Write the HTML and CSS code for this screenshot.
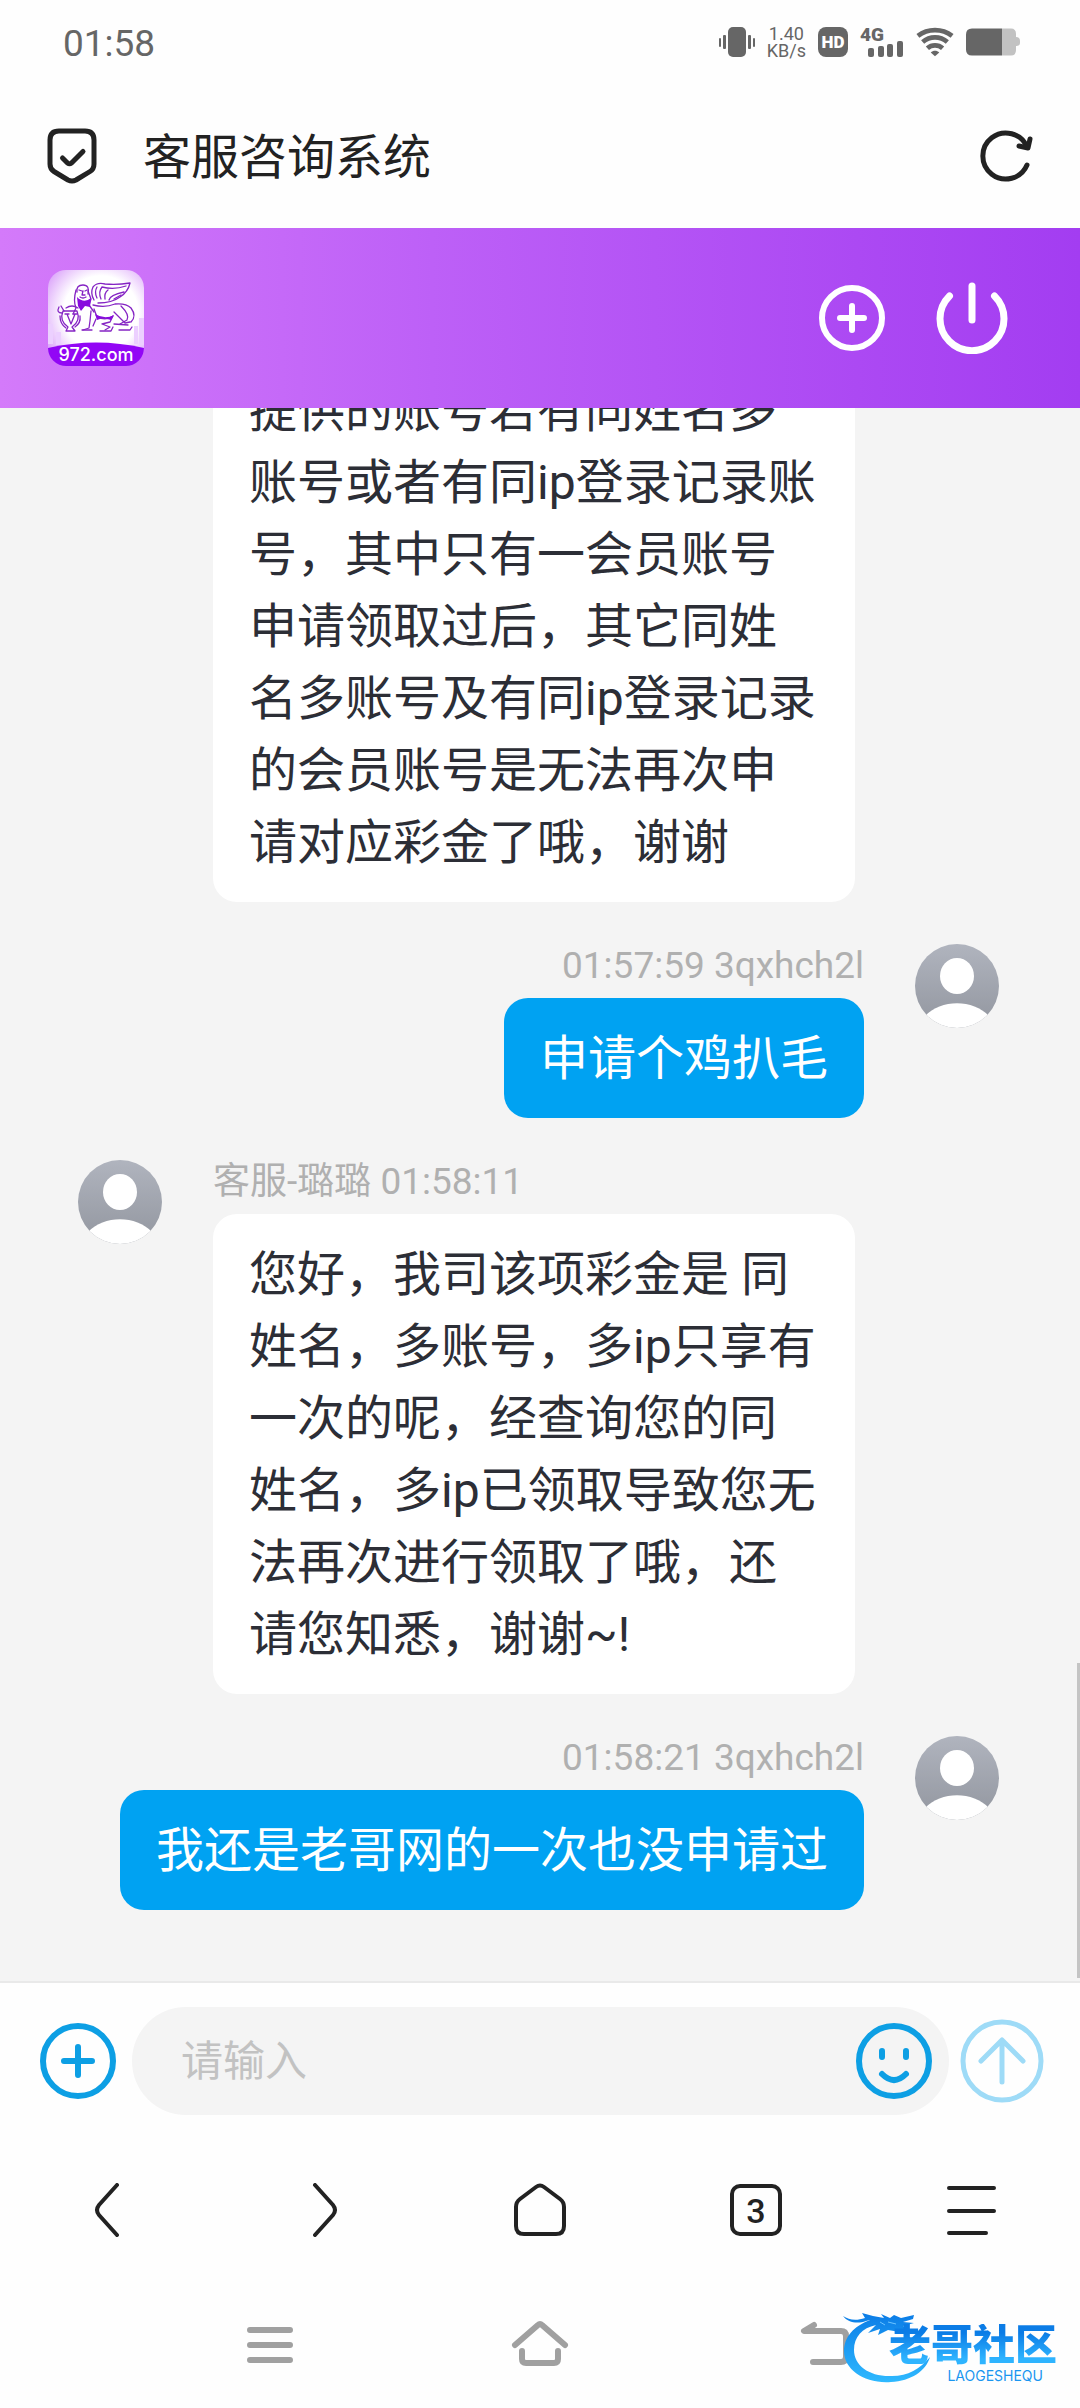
FILE: index.html
```
<!DOCTYPE html>
<html lang="zh">

<head>
    <meta charset="UTF-8">
    <meta name="viewport" content="width=device-width, initial-scale=1.0">
    <title>客服咨询系统</title>
    <link rel="stylesheet" href="styles.css">
</head>

<body>

    <div class="status-bar">
        <span class="clock">01:58</span>
        <div class="status-icons">
            <svg width="36" height="30" viewBox="0 0 36 30" fill="#666">
                <rect x="9" y="0" width="18" height="30" rx="5"/>
                <rect x="0" y="11" width="2" height="9" rx="1"/>
                <rect x="4" y="8" width="3" height="14" rx="1"/>
                <rect x="29" y="8" width="3" height="14" rx="1"/>
                <rect x="34" y="11" width="2" height="9" rx="1"/>
            </svg>
            <span class="net-speed">1.40<br>KB/s</span>
            <span class="hd">HD</span>
            <div class="signal">
                <span>4G</span>
                <svg width="36" height="17" viewBox="0 0 36 17" fill="#666">
                    <rect x="0" y="8" width="6" height="9" rx="2"/>
                    <rect x="10" y="6" width="6" height="11" rx="2"/>
                    <rect x="19" y="4" width="6" height="13" rx="2"/>
                    <rect x="29" y="1" width="6" height="16" rx="2"/>
                </svg>
            </div>
            <svg width="38" height="30" viewBox="0 0 40 30" fill="none" stroke="#666" stroke-width="5">
                <path d="M2 8.5C12.500 .5 27.500 .5 38 8.500"/>
                <path d="M7 15C14.500 8.500 25.500 8.500 33 15"/>
                <path d="M12 21.500C16.500 17.500 23.500 17.500 28 21.500"/>
                <path d="M15.500 26C18 23.500 22 23.500 24.500 26L20 30Z" fill="#666" stroke="none"/>
            </svg>
            <svg width="54" height="28" viewBox="0 0 54 28">
                <path d="M36 .5H45Q50 .5 50 6V9Q54 9 54 13V15Q54 18 50 18V22Q50 27.500 45 27.500H36Z" fill="#c2c2c2"/>
                <path d="M36 .5H6Q0 .5 0 6.500V21.500Q0 27.500 6 27.500H36Z" fill="#666"/>
            </svg>
        </div>
    </div>

    <div class="title-bar">
        <svg width="50" height="56" viewBox="0 0 50 56" fill="none" stroke="#222" stroke-width="5" stroke-linecap="round" stroke-linejoin="round">
            <path d="M12 3H38Q47 3 47 12V36Q47 41 43 43.500L29 52Q25 54 21 52L7 43.500Q3 41 3 36V12Q3 3 12 3Z"/>
            <path d="M15.500 30L20.500 35Q22.500 36.500 24.500 35L36 23.500"/>
        </svg>
        <h1>客服咨询系统</h1>
        <button class="icon-button" aria-label="刷新">
            <svg width="54" height="54" viewBox="0 0 54 54" fill="none" stroke="#222" stroke-width="5" stroke-linecap="round" stroke-linejoin="round">
                <path d="M48 36A23 23 0 1 1 48 18"/>
                <path d="M40 17L49 19L51 10"/>
            </svg>
        </button>
    </div>

    <header class="chat-header">
        <svg class="logo" width="96" height="96" viewBox="0 0 96 96">
            <defs>
                <radialGradient id="glow" cx="55%" cy="45%" r="65%">
                    <stop offset="0.600" stop-color="#fff"/>
                    <stop offset="1" stop-color="#dca6fa"/>
                </radialGradient>
                <clipPath id="logoClip"><rect width="96" height="96" rx="18"/></clipPath>
            </defs>
            <g clip-path="url(#logoClip)">
                <rect width="96" height="96" fill="url(#glow)"/>
                <path d="M0 54H5V74H0ZM8 62H13V75H8ZM86 56H90V74H86ZM91 48H96V75H91Z" fill="#ecd0ff"/>
                <path d="M0 78Q48 67 96 78V96H0Z" fill="#9206f5"/>
                <g fill="none" stroke="#8524c4" stroke-width="1.300" stroke-linecap="round" stroke-linejoin="round">
                    <path d="M46 30Q42 23 45 17Q49 12 57 14Q70 15 82 13Q80 22 72 27Q64 33 50 33"/>
                    <path d="M49 28Q46 22 49 17M53 29Q50 22 54 17Q66 20 78 16M57 29Q56 23 60 20M61 30Q62 25 76 22M66 29L73 25"/>
                    <path d="M29 22Q28 15 35 15Q42 15 40 24M31 20L34 21M37 21L39 20M35 21L34 25L37 25M32 27Q35 29 38 27"/>
                    <path d="M28 20Q25 31 28 38L25 44M40 21L43 29L41 35L46 42"/>
                    <path d="M45 35Q57 38 67 34Q78 33 83 38Q89 46 83 52M73 36Q82 45 79 50L72 54M66 42L77 53L82 52"/>
                    <path d="M46 39L49 47Q58 51 65 46L62 52L54 54L62 57L57 60M43 41L42 51L41 58L35 60M48 49L45 56"/>
                    <path d="M34 60H44M52 61H63L65 57M71 60H82L84 57M66 54L80 55"/>
                    <path d="M15 41H29Q33 51 24 57L27 61H18L20 57Q11 51 15 41Z"/>
                    <path d="M11 37Q8 43 14 43M13 36L16 41M18 38Q24 34 30 38M12 46Q12 54 18 58M32 46Q33 53 27 57M19 44L23 54L27 44M17 44H21M25 44H29"/>
                </g>
                <path d="M29 27Q36 34 43 28L42 37L37 36L33 41L30 36ZM47 44Q57 50 66 45L63 50L55 48L49 50Z" fill="#870bde"/>
                <text x="48" y="91" text-anchor="middle">972.com</text>
            </g>
        </svg>
        <div class="header-actions">
            <button class="icon-button" aria-label="新建">
                <svg width="66" height="66" viewBox="0 0 66 66" fill="none" stroke="#fff" stroke-width="6" stroke-linecap="round">
                    <circle cx="33" cy="33" r="30"/>
                    <path d="M33 21V45M21 33H45"/>
                </svg>
            </button>
            <button class="icon-button" aria-label="退出">
                <svg width="72" height="72" viewBox="0 0 72 72" fill="none" stroke="#fff" stroke-width="7" stroke-linecap="round">
                    <path d="M13.500 14A32 32 0 1 0 58.500 14"/>
                    <path d="M36 4V38"/>
                </svg>
            </button>
        </div>
    </header>

    <main class="messages">
        <div class="message">
            <svg class="avatar" viewBox="0 0 84 84"><use href="#person"/></svg>
            <div class="content">
                <div class="bubble">提供的账号若有同姓名多账号或者有同ip登录记录账号，其中只有一会员账号申请领取过后，其它同姓名多账号及有同ip登录记录的会员账号是无法再次申请对应彩金了哦，谢谢</div>
            </div>
        </div>

        <div class="message mine">
            <svg class="avatar" viewBox="0 0 84 84"><use href="#person"/></svg>
            <div class="content">
                <div class="meta">01:57:59 3qxhch2l</div>
                <div class="bubble">申请个鸡扒毛</div>
            </div>
        </div>

        <div class="message">
            <svg class="avatar" viewBox="0 0 84 84">
                <defs>
                    <linearGradient id="avatarFill" x1="0" y1="0" x2="0" y2="1">
                        <stop offset="0" stop-color="#b0b4be"/>
                        <stop offset="1" stop-color="#92969f"/>
                    </linearGradient>
                    <clipPath id="avatarClip"><circle cx="42" cy="42" r="42"/></clipPath>
                    <g id="person" clip-path="url(#avatarClip)">
                        <rect width="84" height="84" fill="url(#avatarFill)"/>
                        <ellipse cx="42" cy="32" rx="17" ry="18" fill="#fff"/>
                        <path d="M10 72C26 55 58 55 74 72V84H10Z" fill="#fff"/>
                    </g>
                </defs>
                <use href="#person"/>
            </svg>
            <div class="content">
                <div class="meta">客服-璐璐 01:58:11</div>
                <div class="bubble">您好，我司该项彩金是 同姓名，多账号，多ip只享有一次的呢，经查询您的同姓名，多ip已领取导致您无法再次进行领取了哦，还请您知悉，谢谢~!</div>
            </div>
        </div>

        <div class="message mine">
            <svg class="avatar" viewBox="0 0 84 84"><use href="#person"/></svg>
            <div class="content">
                <div class="meta">01:58:21 3qxhch2l</div>
                <div class="bubble">我还是老哥网的一次也没申请过</div>
            </div>
        </div>
        <div class="scroll-thumb"></div>
    </main>

    <form class="composer">
        <button type="button" class="icon-button" aria-label="更多">
            <svg width="76" height="76" viewBox="0 0 76 76" fill="none" stroke="#0d9fe4" stroke-width="6" stroke-linecap="round">
                <circle cx="38" cy="38" r="35"/>
                <path d="M38 24V52M24 38H52"/>
            </svg>
        </button>
        <div class="input-box">
            <input type="text" placeholder="请输入" aria-label="请输入">
            <button type="button" class="icon-button" aria-label="表情">
                <svg width="76" height="76" viewBox="0 0 76 76" fill="none" stroke="#0d9fe4" stroke-width="6" stroke-linecap="round">
                    <circle cx="38" cy="38" r="35"/>
                    <path d="M26 28V34M50 28V34M26 51Q38 63 50 51"/>
                </svg>
            </button>
        </div>
        <button type="submit" class="icon-button" aria-label="发送">
            <svg width="84" height="84" viewBox="0 0 84 84" fill="none" stroke="#9edbf7" stroke-width="5" stroke-linecap="round" stroke-linejoin="round">
                <circle cx="42" cy="42" r="39"/>
                <path d="M42 22V63M21 42L42 21L63 42"/>
            </svg>
        </button>
    </form>

    <nav class="browser-nav">
        <button class="icon-button" aria-label="后退">
            <svg width="54" height="54" viewBox="0 0 54 54" fill="none" stroke="#222" stroke-width="4" stroke-linecap="round">
                <path d="M36 2L18 22Q14 27 18 32L36 52"/>
            </svg>
        </button>
        <button class="icon-button" aria-label="前进">
            <svg width="54" height="54" viewBox="0 0 54 54" fill="none" stroke="#222" stroke-width="4" stroke-linecap="round">
                <path d="M18 2L36 22Q40 27 36 32L18 52"/>
            </svg>
        </button>
        <button class="icon-button" aria-label="主页">
            <svg width="54" height="54" viewBox="0 0 54 54" fill="none" stroke="#222" stroke-width="4">
                <path d="M23 4Q27 1 31 4L47 16Q51 19 51 24V43Q51 51 43 51H11Q3 51 3 43V24Q3 19 7 16Z"/>
            </svg>
        </button>
        <button class="icon-button" aria-label="标签页"><span class="tabs">3</span></button>
        <button class="icon-button" aria-label="菜单">
            <svg width="50" height="50" viewBox="0 0 50 50" fill="none" stroke="#222" stroke-width="4" stroke-linecap="round">
                <path d="M2 3H47M2 26H47M2 48H39"/>
            </svg>
        </button>
    </nav>

    <nav class="system-nav">
        <button class="icon-button" aria-label="最近任务">
            <svg width="46" height="38" viewBox="0 0 46 38" fill="none" stroke="#a0a0a0" stroke-width="6" stroke-linecap="round">
                <path d="M3 4H43M3 19H43M3 34H43"/>
            </svg>
        </button>
        <button class="icon-button" aria-label="桌面">
            <svg width="58" height="50" viewBox="0 0 58 50" fill="none" stroke="#a0a0a0" stroke-width="6" stroke-linecap="round" stroke-linejoin="round">
                <path d="M4 25L27 5Q29 3 31 5L54 25"/>
                <path d="M11 31V39Q11 43 15 43H43Q47 43 47 39V31"/>
            </svg>
        </button>
        <button class="icon-button" aria-label="返回">
            <svg width="78" height="50" viewBox="0 0 78 50" fill="none" stroke="#a0a0a0" stroke-width="6" stroke-linecap="round" stroke-linejoin="round">
                <path d="M43 5L33 11H70Q75 11 75 16V37Q75 42 70 42H42"/>
            </svg>
        </button>
        <div class="watermark">
            <svg width="92" height="72" viewBox="0 0 92 72">
                <defs>
                    <linearGradient id="dragon" x1="0" y1="0" x2="0" y2="1">
                        <stop offset="0" stop-color="#0b7ce6"/>
                        <stop offset="1" stop-color="#2eb9ff"/>
                    </linearGradient>
                </defs>
                <path fill="url(#dragon)" d="M28 8C12 14 2 25 2 39C2 58 23 72 49 70C69 69 84 59 88 45C78 57 66 64 50 64C28 65 12 54 12 38C12 25 20 16 34 13L26 21L38 17L36 23L46 18L58 20L66 17L61 14L72 11L61 10L71 7L72 3L59 6L52 3L48 6L39 2L42 6L31 4L20 1L23 6C14 9 7 8 1 4C6 11 16 12 24 9Z"/>
                <path d="M46 10L54 12M38 10L43 13" stroke="#6cc4ff" stroke-width="1"/>
            </svg>
            <div class="watermark-text">
                <strong>老哥社区</strong>
                <small>LAOGESHEQU</small>
            </div>
        </div>
    </nav>

</body>

</html>
```
FILE: styles.css
```
* {
    box-sizing: border-box;
}

body {
    margin: 0;
    height: 100vh;
    display: flex;
    flex-direction: column;
    background-color: #fefefe;
    color: #222;
    font-family: Roboto, "Noto Sans CJK SC", sans-serif;
}

svg {
    display: block;
    flex: none;
}

.icon-button {
    display: flex;
    align-items: center;
    justify-content: center;
    padding: 0;
    border: none;
    background: none;
    color: inherit;
    font-family: inherit;
    cursor: pointer;
}

/* 状态栏 */
.status-bar {
    flex: none;
    height: 84px;
    padding: 0 60px 0 63px;
    display: flex;
    align-items: center;
    justify-content: space-between;
    color: #666;
}

.clock {
    font-size: 37px;
    line-height: 48px;
    padding-top: 4px;
}

.status-icons {
    display: flex;
    align-items: center;
    gap: 12px;
}

.net-speed {
    font-size: 18px;
    line-height: 17px;
    text-align: center;
}

.hd {
    width: 30px;
    height: 30px;
    border-radius: 8px;
    background-color: #666;
    color: #fff;
    font-size: 17px;
    font-weight: 900;
    line-height: 30px;
    text-align: center;
}

.signal {
    display: grid;
    width: 44px;
    height: 30px;
}

.signal span,
.signal svg {
    grid-area: 1 / 1;
}

.signal span {
    font-size: 19px;
    font-weight: 900;
    line-height: 16px;
}

.signal svg {
    place-self: end;
}

/* 标题栏 */
.title-bar {
    flex: none;
    height: 144px;
    padding: 0 47px;
    display: flex;
    align-items: center;
}

.title-bar h1 {
    flex: 1;
    margin: 0;
    padding: 4px 0 0 46px;
    font-size: 48px;
    font-weight: 400;
    line-height: 72px;
}

.chat-header {
    flex: none;
    height: 180px;
    padding: 0 72px 0 48px;
    display: flex;
    align-items: center;
    justify-content: space-between;
    background: linear-gradient(90deg, #d47afa, #bd60f7 40%, #a33df1);
}

.logo text {
    fill: #fff;
    font-family: Inter, sans-serif;
    font-size: 18px;
    font-weight: 500;
}

.header-actions {
    display: flex;
    align-items: center;
    gap: 51px;
}

/* 消息列表 */
.messages {
    position: relative;
    flex: 1;
    min-height: 0;
    padding: 0 81px 71px 78px;
    display: flex;
    flex-direction: column;
    justify-content: flex-end;
    gap: 42px;
    overflow: hidden;
    background-color: #f4f4f4;
}

.message {
    display: flex;
    align-items: flex-start;
    gap: 51px;
}

.mine {
    flex-direction: row-reverse;
}

.avatar {
    width: 84px;
    height: 84px;
}

/* 头像已随消息滚出可视区 */
.message:first-child .avatar {
    visibility: hidden;
}

.content {
    display: flex;
    flex-direction: column;
    align-items: flex-start;
    max-width: 642px;
}

.mine .content {
    align-items: flex-end;
    max-width: none;
}

.meta {
    height: 54px;
    color: #b0b0b0;
    font-size: 37px;
    line-height: 44px;
}

.bubble {
    padding: 25px 36px 23px;
    border-radius: 24px;
    background-color: #fff;
    color: #2c2e36;
    font-size: 48px;
    line-height: 72px;
}

.mine .bubble {
    background-color: #00a2f2;
    color: #fff;
}

.scroll-thumb {
    position: absolute;
    right: 0;
    bottom: 3px;
    width: 3px;
    height: 20%;
    background-color: #c4c4c4;
}

/* 输入区 */
.composer {
    flex: none;
    padding: 24px 36px 23px 40px;
    display: flex;
    align-items: center;
    border-top: 2px solid #e9e9e9;
}

.input-box {
    flex: 1;
    min-width: 0;
    height: 108px;
    margin: 0 11px 0 16px;
    padding: 0 17px 0 49px;
    display: flex;
    align-items: center;
    border-radius: 54px;
    background-color: #f4f4f4;
}

.input-box input {
    flex: 1;
    min-width: 0;
    padding: 2px 0 0;
    border: none;
    outline: none;
    background: none;
    color: #2c2e36;
    font-family: inherit;
    font-size: 42px;
    line-height: 60px;
}

.input-box input::placeholder {
    color: #c2c2c2;
    opacity: 1;
}

/* 浏览器导航 */
.browser-nav {
    flex: none;
    height: 144px;
    display: grid;
    grid-template-columns: repeat(5, 1fr);
}

.tabs {
    width: 52px;
    height: 52px;
    border: 4px solid #222;
    border-radius: 10px;
    font-size: 34px;
    font-weight: 500;
    line-height: 46px;
}

/* 系统导航 */
.system-nav {
    position: relative;
    flex: none;
    height: 126px;
    display: grid;
    grid-template-columns: 1fr 2fr 2fr 2fr 1fr;
}

.system-nav .icon-button:first-child {
    grid-column: 2;
}

.watermark {
    position: absolute;
    right: 17px;
    bottom: 24px;
    display: flex;
    align-items: flex-end;
}

.watermark-text {
    width: 180px;
    margin-left: -51px;
    display: flex;
    flex-direction: column;
    align-items: center;
    color: #1a96f0;
}

.watermark-text strong {
    font-size: 42px;
    font-weight: 900;
    line-height: 44px;
    background: linear-gradient(#0b7ce6 20%, #2eb4ff 80%);
    -webkit-background-clip: text;
    background-clip: text;
    color: transparent;
}

.watermark-text small {
    align-self: flex-end;
    padding-right: 20px;
    font-family: Inter, sans-serif;
    font-size: 14px;
    line-height: 16px;
}
```
